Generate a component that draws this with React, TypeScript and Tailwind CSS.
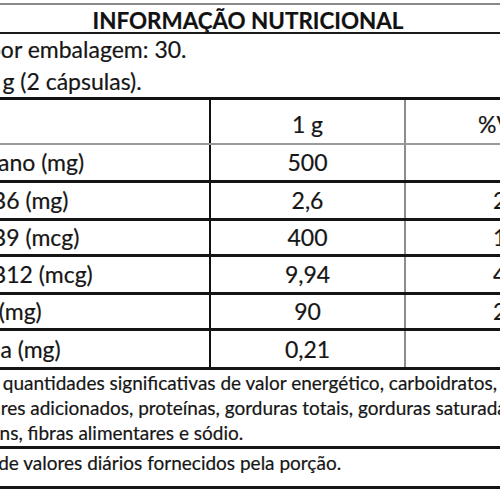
const rows = [
  { label: 'L-Triptofano (mg)', shift: '-ml-[86px]', qty: '500', vd: '', h: 'h-[38px]' },
  { label: 'Vitamina B6 (mg)', shift: '-ml-[104px]', qty: '2,6', vd: '200', h: 'h-[38px]' },
  { label: 'Vitamina B9 (mcg)', shift: '-ml-[104px]', qty: '400', vd: '100', h: 'h-[36px]' },
  { label: 'Vitamina B12 (mcg)', shift: '-ml-[104px]', qty: '9,94', vd: '414', h: 'h-[38px]' },
  { label: 'Magnésio (mg)', shift: '-ml-[105px]', qty: '90', vd: '21', h: 'h-[36px]' },
  { label: 'Riboflavina (mg)', shift: '-ml-[100px]', qty: '0,21', vd: '', h: 'h-[39px]' },
];

const notes = [
  { text: '*Não contém quantidades significativas de valor energético, carboidratos, açúcares totais,', shift: '-ml-[112px]' },
  { text: 'açúcares adicionados, proteínas, gorduras totais, gorduras saturadas, gorduras', shift: '-ml-[47px]' },
  { text: 'gorduras trans, fibras alimentares e sódio.', shift: '-ml-[101px]' },
];

export default function App() {
  return (
    <div className="h-[500px] w-[500px] overflow-hidden bg-white pt-[3px] font-['Lato',sans-serif] text-[#161616] [-webkit-text-stroke:0.2px_#161616]">
      {/* title */}
      <div className="box-border h-[31px] border-t-2 border-b-2 border-t-[#8a8a8a] border-b-[#1a1a1a] pt-[5px] pr-[4px] text-center text-[22.4px] font-bold leading-none text-[#111]">
        INFORMAÇÃO NUTRICIONAL
      </div>

      {/* serving info */}
      <div className="-mt-[1px] text-[23px] leading-[32px]">
        <div className="overflow-hidden whitespace-nowrap">
          <span className="-ml-[98px] inline-block">Porções por embalagem: 30.</span>
        </div>
        <div className="overflow-hidden whitespace-nowrap">
          <span className="-ml-[98px] inline-block">Porção: 1 g (2 cápsulas).</span>
        </div>
      </div>

      {/* table */}
      <div className="border-t-[3px] border-[#111] text-[23px] leading-none">
        <div className="box-border flex h-[45px] border-b-2 border-[#9a9a9a]">
          <div className="w-[211px] shrink-0 border-r-2 border-[#111]" />
          <div className="flex w-[195px] shrink-0 items-center justify-center border-r-2 border-[#8c8c8c] pt-[5px]">
            1 g
          </div>
          <div className="flex flex-1 items-center whitespace-nowrap pt-[5px] pl-[72px]">%VD*</div>
        </div>

        {rows.map((r) => (
          <div key={r.label} className={`box-border flex border-b-[3px] border-[#151515] ${r.h}`}>
            <div className="flex w-[211px] shrink-0 items-center overflow-hidden whitespace-nowrap border-r-2 border-[#111]">
              <span className={`inline-block ${r.shift}`}>{r.label}</span>
            </div>
            <div className="flex w-[195px] shrink-0 items-center justify-center border-r-2 border-[#8c8c8c]">
              {r.qty}
            </div>
            <div className="flex flex-1 items-center whitespace-nowrap pl-[87px]">{r.vd}</div>
          </div>
        ))}
      </div>

      {/* footnotes */}
      <div className="box-border h-[79px] border-b-[3px] border-[#151515] text-[19px] leading-[25px]">
        {notes.map((n) => (
          <div key={n.text} className="overflow-hidden whitespace-nowrap">
            <span className={`inline-block ${n.shift}`}>{n.text}</span>
          </div>
        ))}
      </div>
      <div className="box-border h-[40px] overflow-hidden whitespace-nowrap border-b-[3px] border-[#151515] pt-[1px] text-[19px] leading-[25px]">
        <span className="-ml-[103px] inline-block">*Percentual de valores diários fornecidos pela porção.</span>
      </div>
    </div>
  );
}
